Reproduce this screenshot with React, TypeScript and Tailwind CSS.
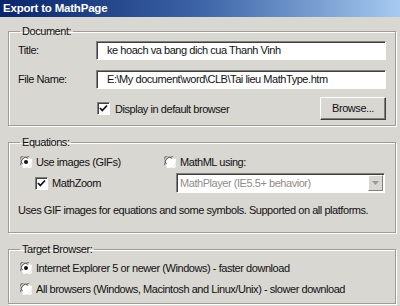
import React from "react";

const Radio = ({ checked }: { checked?: boolean }) => (
  <svg width="12" height="12" viewBox="0 0 12 12" className="shrink-0">
    <circle cx="6" cy="6" r="5.5" fill="#ffffff" />
    <path d="M1.2 9 A5.3 5.3 0 0 1 9 1.2" stroke="#7d7b77" strokeWidth="1.2" fill="none" />
    <path d="M2.3 8.2 A4.2 4.2 0 0 1 8.2 2.3" stroke="#3c3c3c" strokeWidth="1" fill="none" />
    <path d="M10.8 3 A5.3 5.3 0 0 1 3 10.8" stroke="#ffffff" strokeWidth="1.2" fill="none" />
    {checked && <circle cx="6" cy="6" r="2" fill="#111" />}
  </svg>
);

const Check = () => (
  <span className="w-[13px] h-[13px] shrink-0 bg-white border border-t-[#808080] border-l-[#808080] border-r-white border-b-white shadow-[inset_1px_1px_0_#404040] flex items-center justify-center">
    <svg width="9" height="9" viewBox="0 0 9 9">
      <path d="M1 4 L3.3 6.5 L8 1.5" stroke="#111" strokeWidth="1.8" fill="none" />
    </svg>
  </span>
);

const Group = ({ title, className, children }: { title: string; className?: string; children: React.ReactNode }) => (
  <fieldset
    className={
      "mx-[8px] w-[388px] border border-[#9e9c97] shadow-[inset_1px_1px_0_#ffffff,1px_1px_0_#ffffff] pl-[9px] pr-[9px] " +
      (className || "")
    }
  >
    <legend className="ml-[2px] px-[2px] leading-[14px]">{title}</legend>
    {children}
  </fieldset>
);

export default function App() {
  return (
    <div className="w-[400px] h-[306px] overflow-hidden bg-[#d9d7d2] text-[11px] tracking-[-0.45px] text-[#111] font-['Liberation_Sans',Arial,sans-serif]">
      <div className="h-[17px] bg-gradient-to-r from-[#0a246a] via-[#3d64a6] to-[#a6caf0] pl-[3px] flex items-center text-white font-bold text-[11.5px] tracking-[-0.2px] leading-none">
        Export to MathPage
      </div>

      <Group title="Document:" className="mt-[7px] pb-[5px]">
        <div className="flex items-center mt-[3px]">
          <span className="w-[78px] shrink-0">Title:</span>
          <div className="w-[290px] h-[19px] bg-white border border-t-[#808080] border-l-[#808080] border-r-white border-b-white shadow-[inset_1px_1px_0_#404040] flex items-center pl-[10px]">
            ke hoach va bang dich cua Thanh Vinh
          </div>
        </div>
        <div className="flex items-center mt-[10px]">
          <span className="w-[78px] shrink-0">File Name:</span>
          <div className="w-[290px] h-[19px] bg-white border border-t-[#808080] border-l-[#808080] border-r-white border-b-white shadow-[inset_1px_1px_0_#404040] flex items-center pl-[10px]">
            E:\My document\word\CLB\Tai lieu MathType.htm
          </div>
        </div>
        <div className="flex items-end mt-[8px]">
          <div className="ml-[79px] flex items-center gap-[5px] mb-[3px]">
            <Check />
            <span>Display in default browser</span>
          </div>
          <div className="ml-auto w-[66px] h-[23px] border border-t-white border-l-white border-r-[#404040] border-b-[#404040] shadow-[inset_-1px_-1px_0_#808080] flex items-center justify-center">
            Browse...
          </div>
        </div>
      </Group>

      <Group title="Equations:" className="mt-[9px] pb-[15px]">
        <div className="flex items-center h-[16px] mt-[5px]">
          <div className="flex items-center gap-[4px] ml-[2px] w-[144px]">
            <Radio checked />
            <span>Use images (GIFs)</span>
          </div>
          <div className="flex items-center gap-[4px]">
            <Radio />
            <span>MathML using:</span>
          </div>
        </div>
        <div className="flex items-center mt-[3px] h-[20px]">
          <div className="flex items-center gap-[4px] ml-[17px] w-[141px]">
            <Check />
            <span>MathZoom</span>
          </div>
          <div className="w-[209px] h-[20px] bg-white border border-t-[#808080] border-l-[#808080] border-r-white border-b-white shadow-[inset_1px_1px_0_#404040] flex items-center">
            <span className="flex-1 pl-[3px] text-[#8f8d89]">MathPlayer (IE5.5+ behavior)</span>
            <div className="w-[15px] h-[16px] mr-[1px] bg-[#d9d7d2] border border-t-white border-l-white border-r-[#808080] border-b-[#808080] flex items-center justify-center">
              <svg width="7" height="4" viewBox="0 0 7 4">
                <path d="M0 0 H7 L3.5 4 Z" fill="#9a9894" />
              </svg>
            </div>
          </div>
        </div>
        <div className="mt-[10px] leading-[14px] whitespace-nowrap">
          Uses GIF images for equations and some symbols. Supported on all platforms.
        </div>
      </Group>

      <Group title="Target Browser:" className="mt-[9px] pb-[6px]">
        <div className="flex items-center gap-[4px] h-[16px] mt-[4px] ml-[2px]">
          <Radio checked />
          <span>Internet Explorer 5 or newer (Windows) - faster download</span>
        </div>
        <div className="flex items-center gap-[4px] h-[16px] mt-[5px] ml-[2px]">
          <Radio />
          <span>All browsers (Windows, Macintosh and Linux/Unix) - slower download</span>
        </div>
      </Group>
    </div>
  );
}
